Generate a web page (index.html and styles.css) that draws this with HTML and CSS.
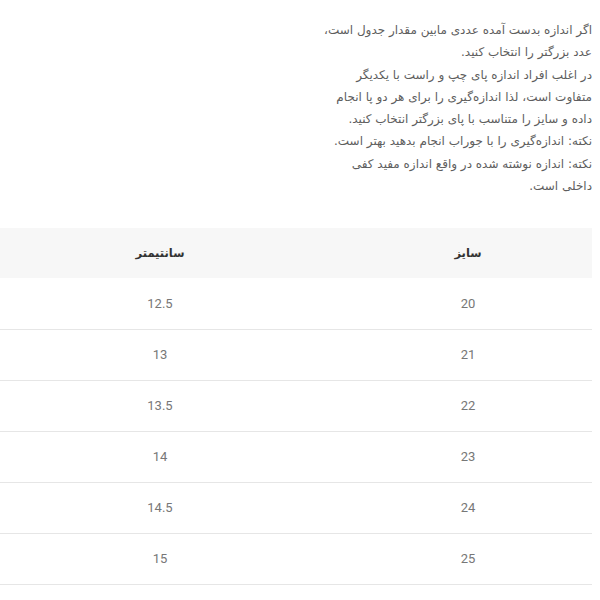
FILE: index.html
```html
<!DOCTYPE html>
<html lang="fa" dir="rtl">
<head>
<meta charset="utf-8">
<link rel="stylesheet" href="styles.css">
</head>
<body>
<div class="page">
  <div class="notes">
    <p>اگر اندازه بدست آمده عددی مابین مقدار جدول است،<br>عدد بزرگتر را انتخاب کنید.</p>
    <p>در اغلب افراد اندازه پای چپ و راست با یکدیگر<br>متفاوت است، لذا اندازه‌گیری را برای هر دو پا انجام<br>داده و سایز را متناسب با پای بزرگتر انتخاب کنید.</p>
    <p>نکته: اندازه‌گیری را با جوراب انجام بدهید بهتر است.</p>
    <p>نکته: اندازه نوشته شده در واقع اندازه مفید کفی<br>داخلی است.</p>
  </div>
  <table class="sizes">
    <thead>
      <tr><th class="c-size">سایز</th><th class="c-cm">سانتیمتر</th></tr>
    </thead>
    <tbody>
      <tr><td>20</td><td>12.5</td></tr>
      <tr><td>21</td><td>13</td></tr>
      <tr><td>22</td><td>13.5</td></tr>
      <tr><td>23</td><td>14</td></tr>
      <tr><td>24</td><td>14.5</td></tr>
      <tr><td>25</td><td>15</td></tr>
    </tbody>
  </table>
</div>
</body>
</html>
```
FILE: styles.css
```css
html, body {
  margin: 0;
  padding: 0;
  background: #fff;
}
body {
  font-family: "DejaVu Sans", "Noto Sans", sans-serif;
  overflow: hidden;
}
.page {
  width: 616px;
  margin-right: 8px;
  padding-top: 19px;
}
.notes {
  font-size: 12px;
  line-height: 22.3px;
  color: #5e5e5e;
  text-align: right;
}
.notes p {
  margin: 0;
}
.sizes {
  margin-top: 31px;
  width: 616px;
  table-layout: fixed;
  border-collapse: collapse;
  font-family: Roboto, "DejaVu Sans", sans-serif;
}
.sizes th, .sizes td {
  text-align: center;
  padding: 0;
}
.sizes .c-size {
  width: 248px;
}
.sizes .c-cm {
  width: 368px;
}
.sizes thead tr {
  background: #f7f7f7;
  height: 50px;
}
.sizes th {
  font-family: "DejaVu Sans", sans-serif;
  font-weight: bold;
  font-size: 11.5px;
  color: #333;
}
.sizes tbody tr {
  height: 51px;
  border-bottom: 1.5px solid #e6e6e6;
}
.sizes td {
  font-size: 13px;
  color: #777;
}
```
